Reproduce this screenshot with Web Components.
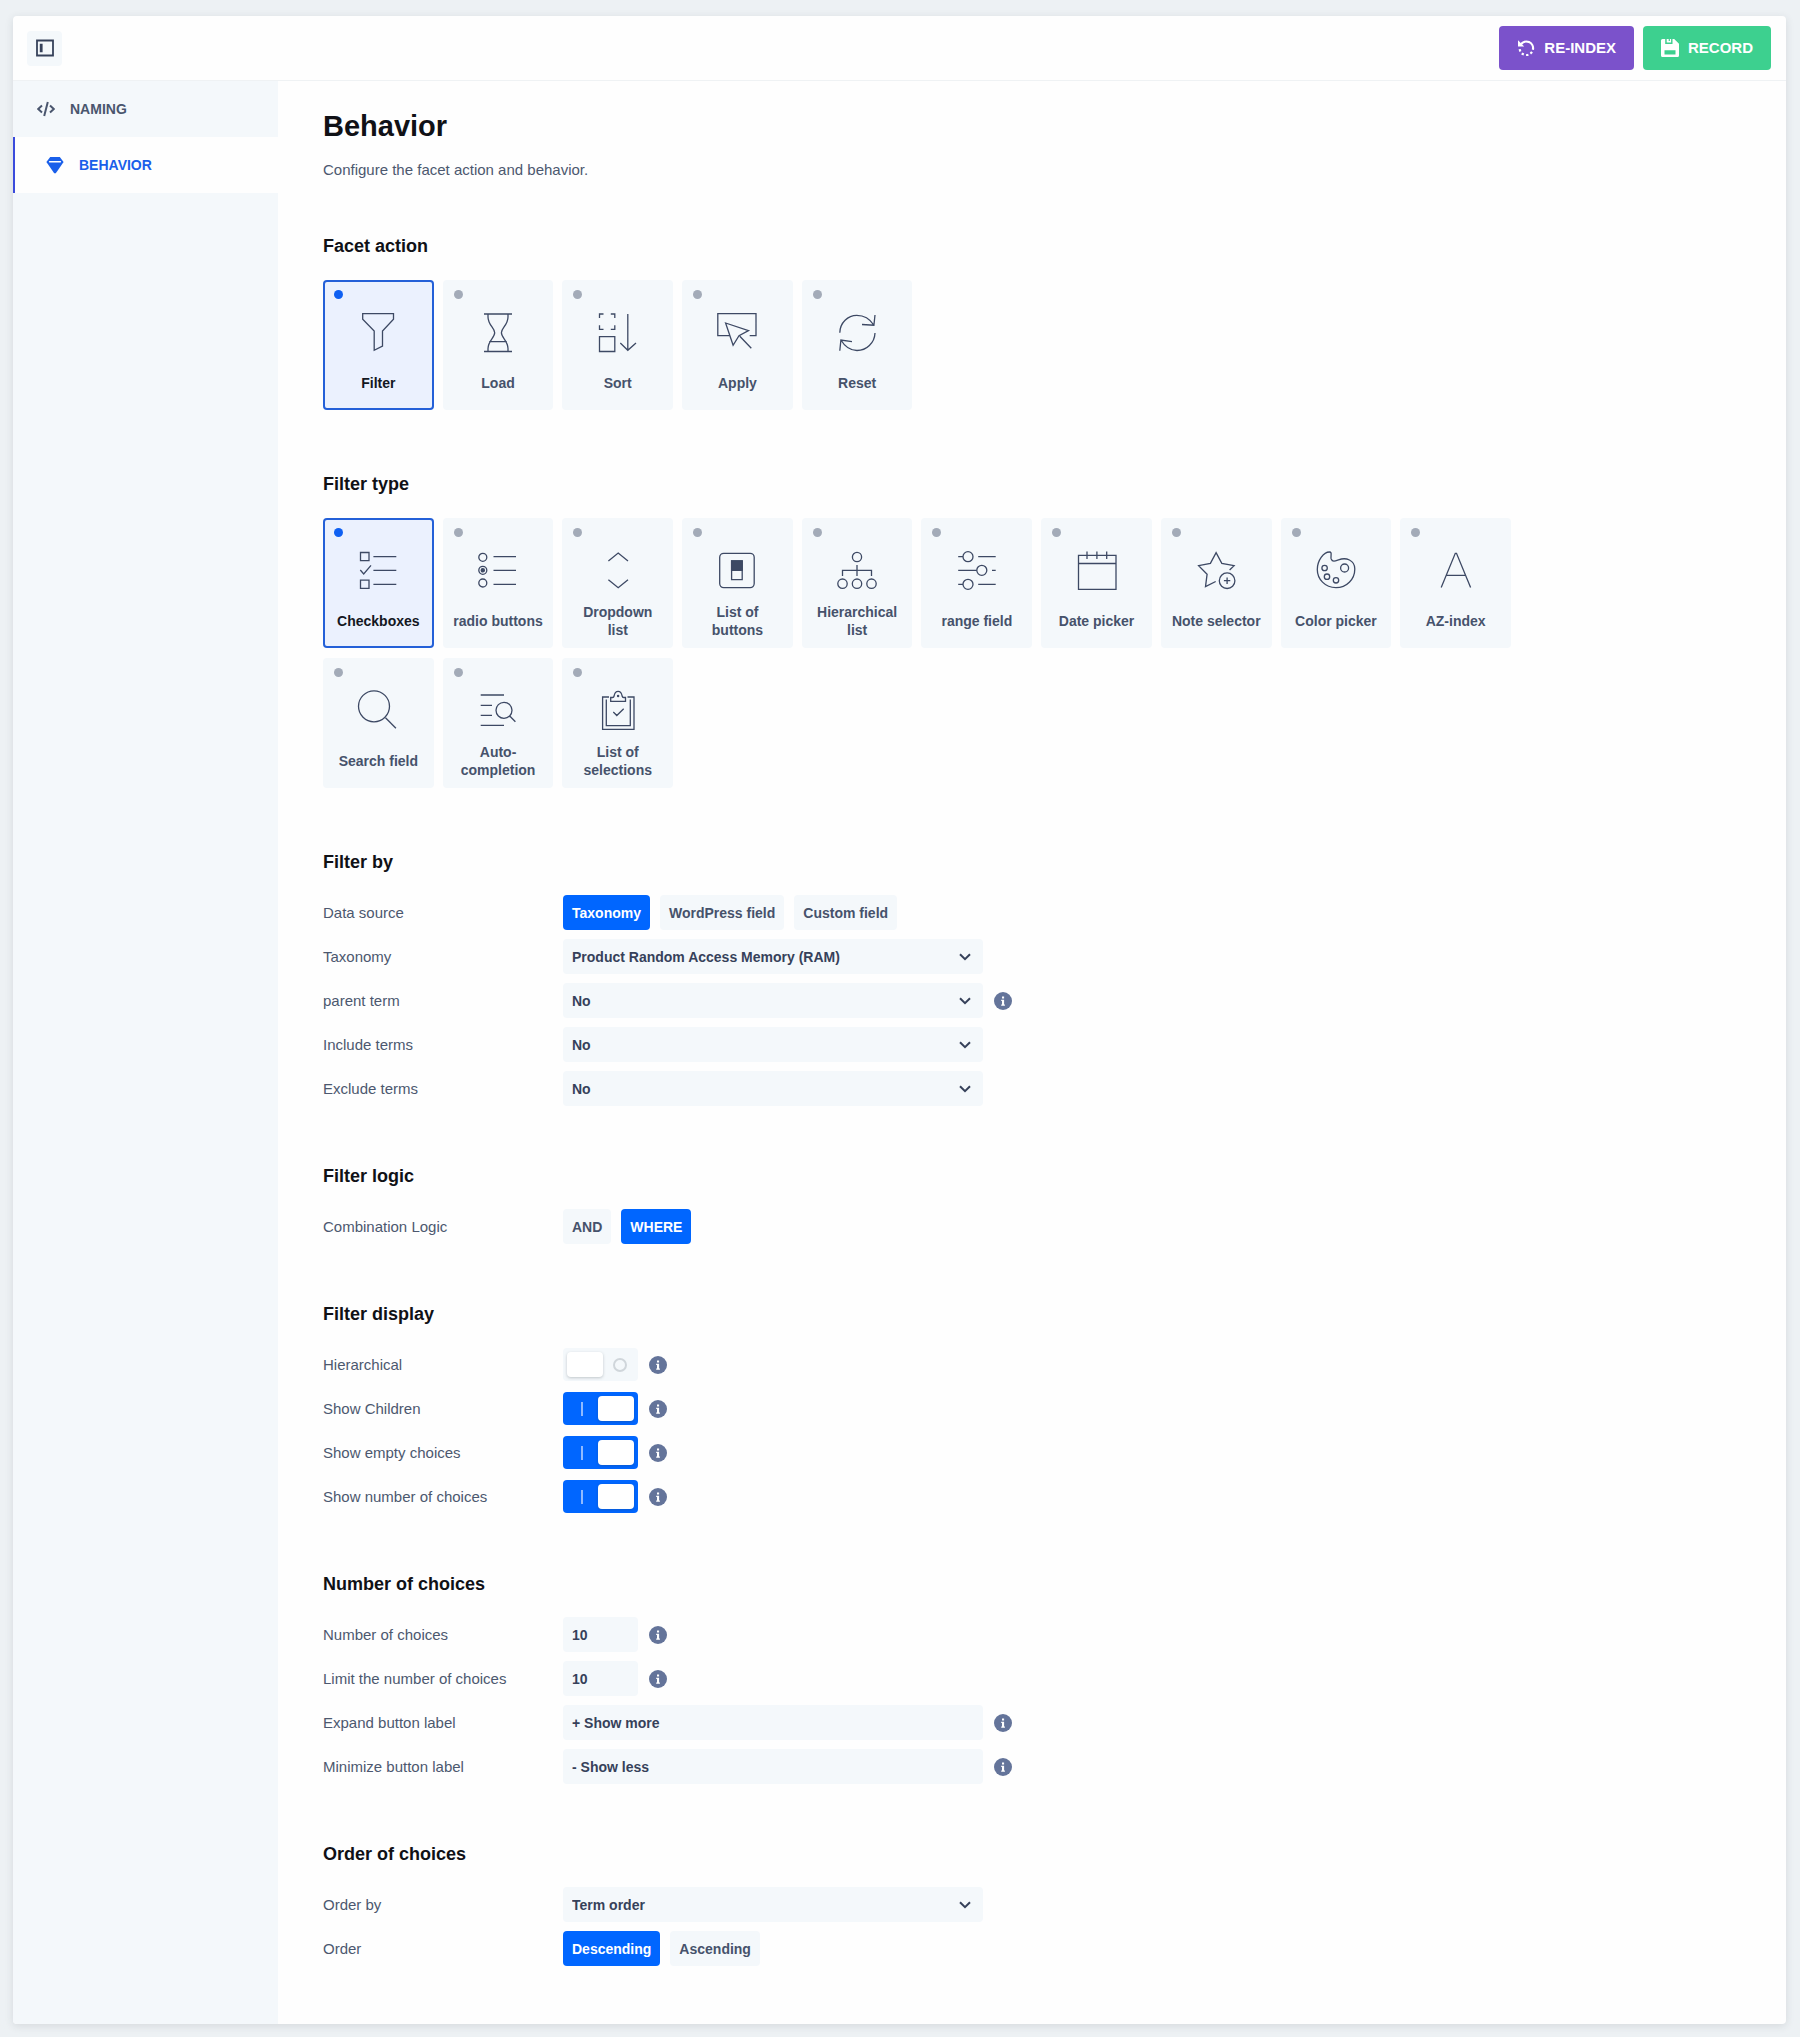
<!DOCTYPE html>
<html lang="en">
<head>
<meta charset="utf-8">
<meta name="viewport" content="width=device-width, initial-scale=1">
<title>Facet settings</title>
<style>
  body {
    margin: 0;
    background: #edf1f4;
    font-family: "Liberation Sans", Arial, sans-serif;
    font-size: 15px;
    color: #4c586f;
    --blue: #0066ff;
    --soft: #f4f8fb;
    --ink: #101116;
    --strong: #36415a;
    --line: #3d4964;
  }
</style>
</head>
<body>
<facet-panel>
  <icon-button slot="tools" label="Toggle sidebar"></icon-button>
  <action-button slot="actions" icon="reindex" color="#7b52cb">RE-INDEX</action-button>
  <action-button slot="actions" icon="save" color="#3dd08f">RECORD</action-button>

  <nav-item slot="nav" icon="code" href="#naming">NAMING</nav-item>
  <nav-item slot="nav" icon="gem" href="#behavior" active>BEHAVIOR</nav-item>

  <page-intro heading="Behavior">Configure the facet action and behavior.</page-intro>

  <settings-section heading="Facet action">
    <choice-grid name="action" label="Facet action"></choice-grid>
  </settings-section>

  <settings-section heading="Filter type">
    <choice-grid name="type" label="Filter type"></choice-grid>
  </settings-section>

  <settings-section heading="Filter by">
    <button-field label="Data source" options="Taxonomy|WordPress field|Custom field" value="Taxonomy"></button-field>
    <select-field label="Taxonomy" value="Product Random Access Memory (RAM)"></select-field>
    <select-field label="parent term" value="No" info></select-field>
    <select-field label="Include terms" value="No"></select-field>
    <select-field label="Exclude terms" value="No"></select-field>
  </settings-section>

  <settings-section heading="Filter logic">
    <button-field label="Combination Logic" options="AND|WHERE" value="WHERE"></button-field>
  </settings-section>

  <settings-section heading="Filter display">
    <toggle-field label="Hierarchical" info></toggle-field>
    <toggle-field label="Show Children" checked info></toggle-field>
    <toggle-field label="Show empty choices" checked info></toggle-field>
    <toggle-field label="Show number of choices" checked info></toggle-field>
  </settings-section>

  <settings-section heading="Number of choices">
    <text-field type="number" label="Number of choices" value="10" info></text-field>
    <text-field type="number" label="Limit the number of choices" value="10" info></text-field>
    <text-field type="text" label="Expand button label" value="+ Show more" info></text-field>
    <text-field type="text" label="Minimize button label" value="- Show less" info></text-field>
  </settings-section>

  <settings-section heading="Order of choices">
    <select-field label="Order by" value="Term order"></select-field>
    <button-field label="Order" options="Descending|Ascending" value="Descending"></button-field>
  </settings-section>
</facet-panel>

<script>
// 18px glyphs for the header and the side menu
const GLYPHS = {
  sidebar: '<path d="M1 1.500h16v15H1z" fill="none" stroke="currentColor" stroke-width="1.800"/><path d="M3.800 4.800h2.800v8.400H3.800z" fill="currentColor"/>',
  code: '<path d="M5 5.5 1.2 9 5 12.5M13 5.5 16.8 9 13 12.5M10.8 2 7.2 16" fill="none" stroke="currentColor" stroke-width="2"/>',
  gem: '<path d="M4.2 1h9.6L17.6 6 9.8 17.2H8.2L.4 6z" fill="currentColor"/><path d="M3.6 5.8h10.8" stroke="#fff" stroke-width="1.4" stroke-linecap="round"/>',
  reindex: '<path d="M3.800 5.500A6.700 6.700 0 0 1 15.900 10.700M15 12.900A6.700 6.700 0 0 1 13.400 14.600M11.400 15.700A6.700 6.700 0 0 1 9.100 16M6.800 15.500A6.700 6.700 0 0 1 4.800 14.300M3.400 12.400A6.700 6.700 0 0 1 2.700 10.200" fill="none" stroke="currentColor" stroke-width="2.200"/><path d="M1 1.300v6.200h6.200z" fill="currentColor"/>',
  save: '<path fill="currentColor" fill-rule="evenodd" d="M1.500 0h2.700v5h7.300V0h1.700L18 4.800v11.700a1.500 1.500 0 0 1-1.500 1.500h-15A1.500 1.500 0 0 1 0 16.500v-15A1.500 1.500 0 0 1 1.500 0zM3.500 11.200v4.200h11v-4.200z"/><path fill="currentColor" d="M5.700 0h2v2h1.200V0h1.200v3.600H5.700z"/>'
};

// 40px outline drawings for the choice cards
const DRAWINGS = {
  filter: '<path d="M4.7 1.7h30.8v5.6l-11 11.7v15l-8.3 4.3V19L4.7 7.3z"/>',
  load: '<path d="M6 2h28M6 39.5h28M10 2v3c0 8 6.7 11 6.7 15.8S10 29 10 36.5v3M30 2v3c0 8-6.6 11-6.6 15.8S30 29 30 36.5v3M11.2 29.7h17.6"/>',
  sort: '<path d="M5.5 2H1.5v4M12.8 2h4v4M1.5 13.3v4h4M16.8 13.3v4h-4M1.5 24.7h15.3v14.8H1.5zM29.8 2v36.3M22.3 31l7.5 7.3L38 31"/>',
  apply: '<path d="M12.5 23.7H.8v-22h38.2v22h-6.3M8.6 11l22.9 7.7-9.5 5-5.9 9.6zM22.8 24.3l11.5 12"/>',
  reset: '<path d="M2.8 20.7C3 10.500 11 3.300 19.800 3.300 27.500 3.300 33 7 36.800 13M25 12.500l11.900.7L38 3M38 21C37.600 31 29.500 38.500 20 38.500 12.500 38.500 7.500 34 3.900 28M2.800 38.700 3.900 28l11.100 1.700"/>',
  checkboxes: '<path d="M2.500 2.500h8.500v8.200H2.500zM2.500 30.200h8.500v8.200H2.500zM2.300 20l3.400 3.900L13 15.300M15.400 6.700h22.900M15.400 20.300h22.900M15.400 34.300h22.900"/>',
  radio: '<circle cx="4.800" cy="7.300" r="4"/><circle cx="4.800" cy="20.300" r="4"/><circle cx="4.800" cy="20.300" r="1.600" fill="currentColor"/><circle cx="4.800" cy="33" r="4"/><path d="M15.500 6.700H38M15.500 20.300H38M15.500 34.300H38"/>',
  dropdown: '<path d="M10.400 11l9.800-8L30 11M10.400 29.700l9.800 8 9.800-8"/>',
  buttons: '<rect x="2.700" y="3.300" width="34.500" height="34.300" rx="4"/><path d="M14.600 11h10.600v18.700H14.600z"/><path d="M14.600 11h10.600v9.300H14.600z" fill="currentColor"/>',
  hierarchy: '<circle cx="20" cy="7" r="4.600"/><circle cx="5.500" cy="33.700" r="4.700"/><circle cx="20" cy="33.700" r="4.700"/><circle cx="34.500" cy="33.700" r="4.700"/><path d="M20 15v11M5.500 26v-5.700h29V26"/>',
  range: '<circle cx="11" cy="6.700" r="5"/><circle cx="24.800" cy="20.300" r="5"/><circle cx="11" cy="34.300" r="5"/><path d="M1.200 6.700H6M21.200 6.700h17.500M1.200 20.300h18.600M35 20.300h3.700M1.200 34.300H6M21.200 34.300h17.500"/>',
  date: '<path d="M1.500 5.300h37.500v34H1.500zM1.500 13.500h37.500M10 1.500v7.500M19.900 1.500v7.500M29.700 1.500v7.500"/>',
  note: '<path d="M33.600 20l4.500-4.300-12.300-2.400-5.700-10.600-5.700 10.600L2.600 15.700l8.500 8.500-1.600 12.500L19.700 31.500"/><circle cx="31.100" cy="30.700" r="7.800"/><path d="M31.100 27.500v6.400M27.900 30.700h6.400"/>',
  color: '<path d="M13.500 2C16.500 2 14.300 6 15.200 9 16.500 12.500 19.500 11 22.500 9.900 30 7 38.800 10 38.800 19 38.800 29.500 30.500 37.700 20 37.700 9 37.700 1.300 29 1.300 19.500 1.300 10.500 7.500 2 13.500 2z"/><circle cx="8.600" cy="18" r="2.700"/><circle cx="11" cy="26.700" r="2.700"/><circle cx="20" cy="30.300" r="2.700"/><circle cx="28.600" cy="18" r="4"/>',
  az: '<path d="M5.200 37.500 19.300 3.300h1.200l14.100 34.200M10.300 25.300h19.300"/>',
  search: '<circle cx="16" cy="16.300" r="15.500"/><path d="M27.500 27.700l10.400 10.500"/>',
  auto: '<path d="M2.700 5H26M2.700 15.300H14M2.700 25.300H14M2.700 35.300H26M31.700 26l5.700 5.700"/><circle cx="26" cy="20.300" r="8"/>',
  selections: '<path d="M11 7H4.600v32.300H36V7h-6.500M8.300 9.500v26.200h24V9.500M12.700 11.300V7.500h1.800c.8 0 1.400-.5 1.600-1.500.5-3 2-4.600 4-4.600s3.500 1.600 4 4.600c.2 1 .8 1.500 1.600 1.500h1.800v3.800zM15.300 22l3.500 3.500 6.900-6.800"/><circle cx="20.100" cy="6" r=".6"/>'
};

const CHOICES = {
  action: [
    ['filter', 'Filter'], ['load', 'Load'], ['sort', 'Sort'], ['apply', 'Apply'], ['reset', 'Reset']
  ],
  type: [
    ['checkboxes', 'Checkboxes'], ['radio', 'radio buttons'], ['dropdown', 'Dropdown list'],
    ['buttons', 'List of buttons'], ['hierarchy', 'Hierarchical list'], ['range', 'range field'],
    ['date', 'Date picker'], ['note', 'Note selector'], ['color', 'Color picker'], ['az', 'AZ-index'],
    ['search', 'Search field'], ['auto', 'Auto-completion'], ['selections', 'List of selections']
  ]
};

function glyph(name) {
  return `<svg class="glyph" width="18" height="18" viewBox="0 0 18 18" aria-hidden="true">${GLYPHS[name]}</svg>`;
}

class BaseElement extends HTMLElement {
  constructor() {
    super();
    this.attachShadow({ mode: 'open' });
  }

  connectedCallback() {
    if(!this.shadowRoot.firstChild) {
      this.shadowRoot.innerHTML = this.render();
    }
  }
}

class FacetPanel extends BaseElement {
  render() {
    return /* html */ `
      <style>
        :host {
          display: flex;
          flex-direction: column;
          margin: 16px 14px 13px 13px;
          background: #fefefe;
          border-radius: 4px;
          box-shadow: 0 2px 8px rgba(40, 50, 60, .12);
          overflow: hidden;
        }

        header {
          display: flex;
          align-items: center;
          justify-content: space-between;
          height: 64px;
          padding: 0 15px 0 14px;
          border-bottom: 1px solid #eff2f4;
        }

        .actions {
          display: flex;
          gap: 9px;
        }

        .body {
          display: grid;
          grid-template-columns: 265px minmax(0, 1fr);
        }

        nav {
          background: var(--soft);
        }

        main {
          padding: 28px 45px 58px;
        }
      </style>
      <header>
        <slot name="tools"></slot>
        <div class="actions"><slot name="actions"></slot></div>
      </header>
      <div class="body">
        <nav><slot name="nav"></slot></nav>
        <main><slot></slot></main>
      </div>
    `;
  }
}

class IconButton extends BaseElement {
  render() {
    return /* html */ `
      <style>
        :host {
          display: block;
        }

        button {
          display: grid;
          place-items: center;
          width: 35px;
          height: 35px;
          padding: 0;
          border: 0;
          border-radius: 4px;
          background: var(--soft);
          color: var(--strong);
          cursor: pointer;
        }
      </style>
      <button type="button" aria-label="${this.getAttribute('label')}">${glyph('sidebar')}</button>
    `;
  }
}

class ActionButton extends BaseElement {
  render() {
    return /* html */ `
      <style>
        :host {
          display: block;
        }

        button {
          display: flex;
          align-items: center;
          gap: 9px;
          height: 44px;
          padding: 0 18px;
          border: 0;
          border-radius: 4px;
          background: ${this.getAttribute('color')};
          color: #fff;
          font: bold 15px/20px "Liberation Sans", Arial, sans-serif;
          cursor: pointer;
        }
      </style>
      <button type="button">${glyph(this.getAttribute('icon'))}<slot></slot></button>
    `;
  }
}

class NavItem extends BaseElement {
  render() {
    return /* html */ `
      <style>
        :host {
          display: block;
        }

        a {
          display: flex;
          align-items: center;
          gap: 15px;
          height: 56px;
          padding-left: 24px;
          color: #4a566e;
          font-size: 14px;
          font-weight: bold;
          text-decoration: none;
        }

        :host([active]) a {
          padding-left: 31px;
          border-left: 2px solid #3a4bdc;
          background: #fefefe;
          color: #1a5fea;
        }
      </style>
      <a href="${this.getAttribute('href')}">${glyph(this.getAttribute('icon'))}<slot></slot></a>
    `;
  }
}

class PageIntro extends BaseElement {
  render() {
    return /* html */ `
      <style>
        :host {
          display: block;
          margin-bottom: 56px;
        }

        h1 {
          margin: 0 0 17px;
          font-size: 29px;
          line-height: 34px;
          color: var(--ink);
        }

        p {
          margin: 0;
          line-height: 20px;
        }
      </style>
      <h1>${this.getAttribute('heading')}</h1>
      <p><slot></slot></p>
    `;
  }
}

class SettingsSection extends BaseElement {
  render() {
    return /* html */ `
      <style>
        :host {
          display: block;
        }

        :host(:not(:last-child)) {
          margin-bottom: 60px;
        }

        h2 {
          margin: 0 0 23px;
          font-size: 18px;
          line-height: 20px;
          color: var(--ink);
        }

        .rows {
          display: grid;
          gap: 9px;
        }
      </style>
      <h2>${this.getAttribute('heading')}</h2>
      <div class="rows"><slot></slot></div>
    `;
  }
}

class ChoiceGrid extends BaseElement {
  connectedCallback() {
    super.connectedCallback();
    this.setAttribute('role', 'radiogroup');
    this.setAttribute('aria-label', this.getAttribute('label'));
  }

  card([icon, text], index) {
    return /* html */ `
      <label>
        <input type="radio" name="${this.getAttribute('name')}" value="${icon}" ${index ? '' : 'checked'}>
        <svg width="40" height="40" viewBox="0 0 40 40" aria-hidden="true">${DRAWINGS[icon]}</svg>
        <span>${text}</span>
      </label>
    `;
  }

  render() {
    return /* html */ `
      <style>
        :host {
          display: grid;
          grid-template-columns: repeat(auto-fill, minmax(110px, 1fr));
          gap: 10px 9px;
          max-width: 1188px;
          padding: 1px 0 4px;
        }

        label {
          position: relative;
          display: flex;
          flex-direction: column;
          align-items: center;
          justify-content: space-between;
          box-sizing: border-box;
          height: 130px;
          padding: 32px 10px 9px;
          border-radius: 4px;
          background: var(--soft);
          color: #46526b;
          font-size: 14px;
          font-weight: bold;
          line-height: 18px;
          text-align: center;
          cursor: pointer;
        }

        label:has(:checked) {
          background: #ebf1fe;
          box-shadow: inset 0 0 0 2px #2460d8;
          color: #131722;
        }

        input {
          position: absolute;
          top: 10px;
          left: 11px;
          appearance: none;
          width: 9px;
          height: 9px;
          margin: 0;
          border-radius: 50%;
          background: #a3abb8;
        }

        input:checked {
          background: #0f60f2;
        }

        svg {
          fill: none;
          stroke: var(--line);
          stroke-width: 1.3;
          color: var(--line);
          overflow: visible;
        }

        span {
          display: flex;
          align-items: center;
          height: 36px;
        }
      </style>
      ${CHOICES[this.getAttribute('name')].map((choice, i) => this.card(choice, i)).join('')}
    `;
  }
}

// A row with its label on the left, a control, and an optional info mark
class FieldRow extends BaseElement {
  get styles() {
    return '';
  }

  get label() {
    return `<label for="control">${this.getAttribute('label')}</label>`;
  }

  render() {
    return /* html */ `
      <style>
        :host {
          display: grid;
          grid-template-columns: 240px minmax(0, 1fr);
          align-items: center;
          height: 35px;
        }

        .cell {
          display: flex;
          align-items: center;
          gap: 11px;
        }

        .control {
          box-sizing: border-box;
          height: 35px;
          margin: 0;
          padding: 0 9px;
          border: 0;
          border-radius: 4px;
          background: var(--soft);
          color: var(--strong);
          font: bold 14px/20px "Liberation Sans", Arial, sans-serif;
        }

        .info {
          flex: none;
        }

        ${this.styles}
      </style>
      ${this.label}
      <div class="cell">
        ${this.control()}
        ${this.hasAttribute('info') ? this.info() : ''}
      </div>
    `;
  }

  info() {
    return /* html */ `
      <svg class="info" width="18" height="18" viewBox="0 0 18 18" role="img" aria-label="Help">
        <circle cx="9" cy="9" r="9" fill="#64749a"/>
        <path d="M8 4.500h2.100v2H8zM7.200 7.800h2.900v4.700h.8v1.300H7.200v-1.300H8V9.100h-.8z" fill="#fff"/>
      </svg>
    `;
  }
}

class SelectField extends FieldRow {
  get styles() {
    return /* css */ `
      .select {
        position: relative;
        flex: 0 1 420px;
      }

      select {
        appearance: none;
        width: 100%;
      }

      .chevron {
        position: absolute;
        top: 14px;
        right: 12px;
        pointer-events: none;
      }
    `;
  }

  control() {
    return /* html */ `
      <div class="select">
        <select id="control" class="control"><option>${this.getAttribute('value')}</option></select>
        <svg class="chevron" width="12" height="8" viewBox="0 0 12 8" aria-hidden="true">
          <path d="M1 1.200l5 5 5-5" fill="none" stroke="#36415a" stroke-width="2"/>
        </svg>
      </div>
    `;
  }
}

class TextField extends FieldRow {
  get styles() {
    return /* css */ `
      input {
        flex: 0 1 420px;
        min-width: 0;
      }

      input[type=number] {
        flex-basis: 75px;
        appearance: textfield;
      }
    `;
  }

  control() {
    return `<input id="control" class="control" type="${this.getAttribute('type')}" value="${this.getAttribute('value')}">`;
  }
}

class ToggleField extends FieldRow {
  get styles() {
    return /* css */ `
      input {
        appearance: none;
        display: flex;
        align-items: center;
        justify-content: space-between;
        box-sizing: border-box;
        width: 75px;
        height: 33px;
        margin: 0;
        padding: 0 4px;
        border-radius: 4px;
        background: var(--soft);
        cursor: pointer;
      }

      input::before {
        content: "";
        width: 36px;
        height: 25px;
        border-radius: 4px;
        background: #fff;
        box-shadow: 0 1px 3px rgba(40, 50, 60, .25);
      }

      input::after {
        content: "";
        box-sizing: border-box;
        width: 14px;
        height: 14px;
        margin-right: 7px;
        border: 2px solid #d0d6db;
        border-radius: 50%;
      }

      input:checked {
        flex-direction: row-reverse;
        background: var(--blue);
      }

      input:checked::after {
        width: 2px;
        margin: 0 0 0 14px;
        border: 0;
        border-radius: 0;
        background: #8fbaff;
      }
    `;
  }

  control() {
    return `<input id="control" type="checkbox" role="switch" ${this.hasAttribute('checked') ? 'checked' : ''}>`;
  }
}

class ButtonField extends FieldRow {
  get styles() {
    return /* css */ `
      .group {
        display: flex;
        gap: 10px;
      }

      button {
        cursor: pointer;
      }

      button[aria-pressed=false] {
        color: #46526b;
      }

      button[aria-pressed=true] {
        background: var(--blue);
        color: #fff;
      }
    `;
  }

  get label() {
    return `<span id="label">${this.getAttribute('label')}</span>`;
  }

  connectedCallback() {
    super.connectedCallback();
    this.shadowRoot.addEventListener('click', this);
  }

  handleEvent(ev) {
    let button = ev.target.closest('button');
    if(!button) return;
    for(let el of this.shadowRoot.querySelectorAll('button')) {
      el.setAttribute('aria-pressed', el === button);
    }
  }

  control() {
    let value = this.getAttribute('value');
    let buttons = this.getAttribute('options').split('|').map(text =>
      `<button type="button" class="control" aria-pressed="${text === value}">${text}</button>`
    );
    return `<div class="group" role="group" aria-labelledby="label">${buttons.join('')}</div>`;
  }
}

customElements.define('facet-panel', FacetPanel);
customElements.define('icon-button', IconButton);
customElements.define('action-button', ActionButton);
customElements.define('nav-item', NavItem);
customElements.define('page-intro', PageIntro);
customElements.define('settings-section', SettingsSection);
customElements.define('choice-grid', ChoiceGrid);
customElements.define('select-field', SelectField);
customElements.define('text-field', TextField);
customElements.define('toggle-field', ToggleField);
customElements.define('button-field', ButtonField);
</script>
</body>
</html>
